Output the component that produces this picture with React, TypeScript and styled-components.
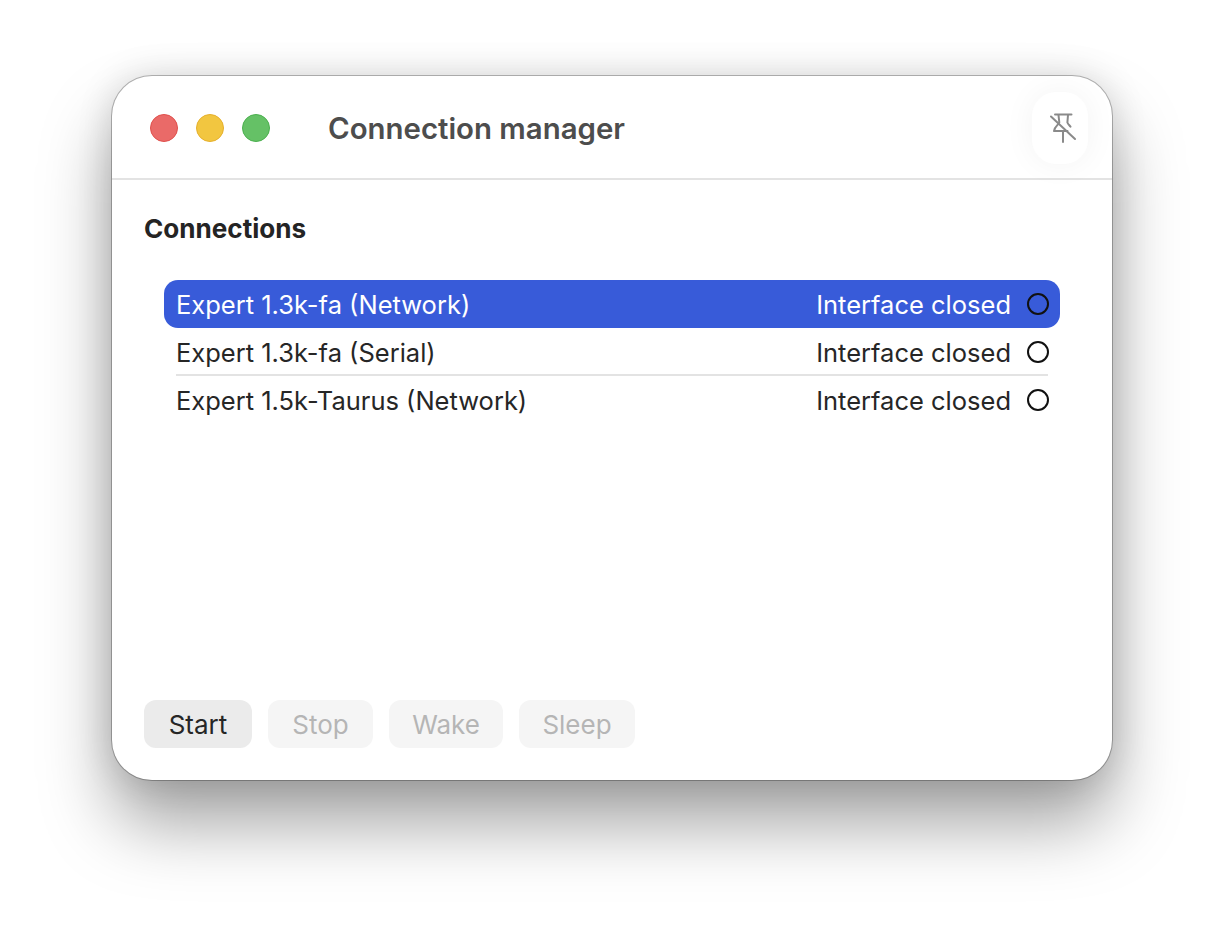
import { createGlobalStyle } from 'styled-components';
import styled from 'styled-components';

const GlobalStyle = createGlobalStyle`
  html, body {
    margin: 0;
    background: #fff;
  }

  body {
    font-family: Inter, "Liberation Sans", sans-serif;
    -webkit-font-smoothing: antialiased;
  }
`;

const Page = styled.div`
  width: 1224px;
  height: 928px;
  padding: 76px 112px 0;
  box-sizing: border-box;
  overflow: hidden;
`;

const Window = styled.div`
  width: 1000px;
  height: 704px;
  box-sizing: border-box;
  display: flex;
  flex-direction: column;
  background: #fff;
  border-radius: 40px;
  box-shadow:
    0 0 0 1px rgba(0, 0, 0, 0.26),
    0 44px 70px rgba(0, 0, 0, 0.36),
    0 0 36px rgba(0, 0, 0, 0.14);
`;

const TitleBar = styled.header`
  height: 104px;
  flex-shrink: 0;
  box-sizing: border-box;
  display: flex;
  align-items: center;
  padding: 2px 24px 0 38px;
  border-bottom: 2px solid #e3e3e3;
`;

const Lights = styled.div`
  display: flex;
  gap: 18px;
  margin-right: 58px;
`;

const Light = styled.span<{ $fill: string; $edge: string }>`
  width: 28px;
  height: 28px;
  box-sizing: border-box;
  border-radius: 50%;
  background: ${p => p.$fill};
  border: 1px solid ${p => p.$edge};
`;

const Title = styled.h1`
  flex: 1;
  margin: 0;
  font-size: 29.4px;
  font-weight: 600;
  color: #4d4d4d;
`;

const PinButton = styled.button`
  width: 56px;
  height: 72px;
  padding: 0 0 0 6px;
  display: flex;
  align-items: center;
  justify-content: center;
  color: #8a8a8a;
  background: #fff;
  border: 0;
  border-radius: 24px;
  box-shadow: 0 0 32px rgba(0, 0, 0, 0.05);
`;

const Content = styled.main`
  flex: 1;
  display: flex;
  flex-direction: column;
  padding: 33px 32px 32px;
`;

const Heading = styled.h2`
  margin: 0 0 35px;
  font-size: 26.1px;
  line-height: 32px;
  font-weight: 700;
  color: #242424;
`;

const List = styled.ul`
  flex: 1;
  list-style: none;
  margin: 0;
  padding: 0 20px;
`;

const Row = styled.li<{ $selected?: boolean }>`
  height: 48px;
  display: flex;
  align-items: center;
  padding: 0 11px 0 12px;
  font-size: 25.5px;
  color: ${p => (p.$selected ? '#fff' : '#262626')};
  background: ${p => (p.$selected ? '#385bd9' : 'transparent')};
  border-radius: 14px;
`;

const Divider = styled.li`
  height: 2px;
  margin: -2px 12px 0;
  background: #e3e3e3;
`;

const RowName = styled.span`
  flex: 1;
`;

const Status = styled.span`
  margin-right: 16px;
`;

const Dot = styled.span`
  width: 22px;
  height: 22px;
  box-sizing: border-box;
  border-radius: 50%;
  border: 2px solid #111;
`;

const Actions = styled.div`
  display: flex;
  gap: 16px;
`;

const Action = styled.button<{ $width: number }>`
  width: ${p => p.$width}px;
  height: 48px;
  padding: 0;
  font: inherit;
  font-size: 26px;
  color: #262626;
  background: #ebebeb;
  border: 0;
  border-radius: 12px;

  &:disabled {
    color: #b5b5b5;
    background: #f5f5f5;
  }
`;

const PinOffIcon = (): JSX.Element => (
  <svg width="26" height="30" viewBox="0 0 26 30" fill="none" stroke="currentColor" strokeWidth="2" strokeLinejoin="round" strokeLinecap="round">
    <path d="M5 1.500h16.500" />
    <path d="M8.500 2l.8 7.500c-1 2.500-4.800 4-5.300 8.500h13.500" />
    <path d="M18 2l-.6 7.500c.6 1.500 2 2.800 3.100 4.200" />
    <path d="M13 18v11" />
    <path d="M1 3.500l24 22.500" />
  </svg>
);

const connections = [
  { name: 'Expert 1.3k-fa (Network)', selected: true },
  { name: 'Expert 1.3k-fa (Serial)' },
  { name: 'Expert 1.5k-Taurus (Network)' },
];

const App = (): JSX.Element => (
  <>
    <GlobalStyle />
    <Page>
      <Window>
        <TitleBar>
          <Lights>
            <Light $fill="#ea6a68" $edge="#e0504c" />
            <Light $fill="#f2c640" $edge="#e6b02c" />
            <Light $fill="#65c166" $edge="#4bb04e" />
          </Lights>
          <Title>Connection manager</Title>
          <PinButton type="button" aria-label="Pin window">
            <PinOffIcon />
          </PinButton>
        </TitleBar>
        <Content>
          <Heading>Connections</Heading>
          <List>
            <Row $selected>
              <RowName>{connections[0].name}</RowName>
              <Status>Interface closed</Status>
              <Dot />
            </Row>
            <Row>
              <RowName>{connections[1].name}</RowName>
              <Status>Interface closed</Status>
              <Dot />
            </Row>
            <Divider />
            <Row>
              <RowName>{connections[2].name}</RowName>
              <Status>Interface closed</Status>
              <Dot />
            </Row>
          </List>
          <Actions>
            <Action $width={108} type="button">Start</Action>
            <Action $width={105} type="button" disabled>Stop</Action>
            <Action $width={114} type="button" disabled>Wake</Action>
            <Action $width={116} type="button" disabled>Sleep</Action>
          </Actions>
        </Content>
      </Window>
    </Page>
  </>
);

export default App;
